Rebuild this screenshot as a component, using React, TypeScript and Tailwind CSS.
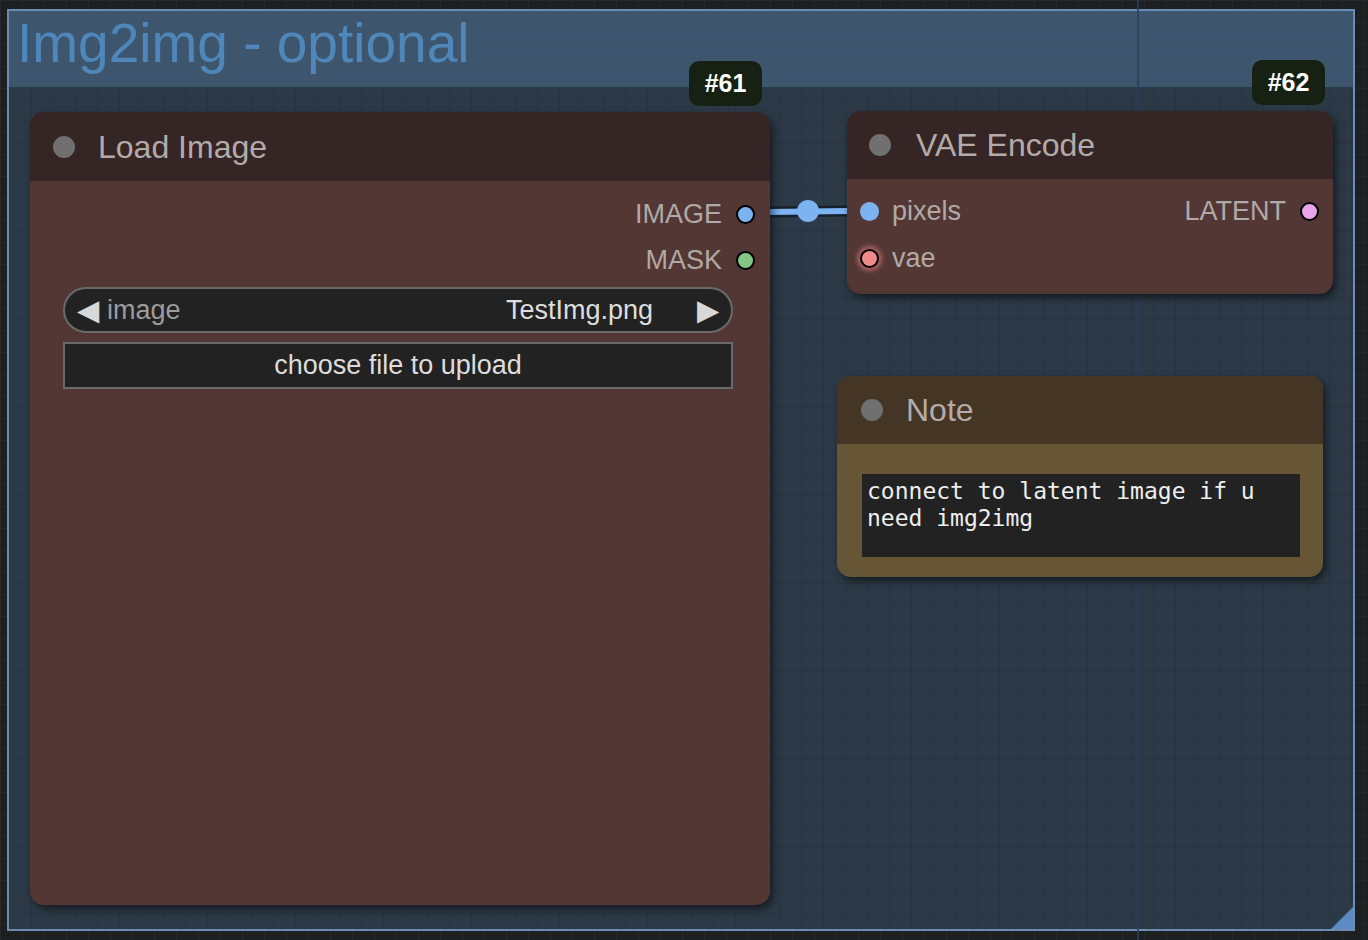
const sans = "font-['Liberation_Sans',Arial,sans-serif]"

function TitleDot() {
  return <span className="w-[22px] h-[22px] rounded-full bg-[#707070] shrink-0" />
}

function Badge({ label }: { label: string }) {
  return (
    <div className="absolute right-[8px] top-[-51px] w-[73px] h-[45px] rounded-[10px] bg-[#172113] flex items-center justify-center text-white text-[25px] font-bold">
      {label}
    </div>
  )
}

function OutputSlot({ label, color }: { label: string; color: string }) {
  return (
    <div className="h-[46px] flex items-center justify-end pr-[15px] gap-[14px]">
      <span className="text-[27px] text-[#b1a9a7]">{label}</span>
      <span className={`w-[19px] h-[19px] rounded-full border-2 border-black ${color}`} />
    </div>
  )
}

function LoadImageNode() {
  return (
    <div className={`absolute left-[30px] top-[112px] w-[740px] h-[793px] rounded-[14px] bg-[#533735] shadow-[3px_4px_8px_rgba(0,0,0,0.55)] flex flex-col ${sans}`}>
      <Badge label="#61" />
      <div className="h-[69px] shrink-0 rounded-t-[14px] bg-[#352524] flex items-center pl-[23px] gap-[23px]">
        <TitleDot />
        <span className="text-[32px] text-[#b3aba9]">Load Image</span>
      </div>
      <div className="pt-[10px] flex flex-col">
        <OutputSlot label="IMAGE" color="bg-[#7cb4f2]" />
        <OutputSlot label="MASK" color="bg-[#83c785]" />
      </div>
      <div className="ml-[33px] mt-[4px] w-[670px] h-[46px] rounded-full bg-[#222222] border-2 border-[#6a6a6a] flex items-center pl-[12px] pr-[12px] text-[27px]">
        <span className="text-[#d8d8d8] text-[29px] leading-none">◀</span>
        <span className="ml-[8px] text-[#9c9c9c]">image</span>
        <span className="ml-auto text-[#dddddd]">TestImg.png</span>
        <span className="ml-[44px] text-[#d8d8d8] text-[29px] leading-none">▶</span>
      </div>
      <div className="ml-[33px] mt-[9px] w-[670px] h-[47px] bg-[#222222] border-2 border-[#6a6a6a] flex items-center justify-center text-[27px] text-[#dddddd]">
        choose file to upload
      </div>
    </div>
  )
}

function InputSlot({ label, dot }: { label: string; dot: string }) {
  return (
    <div className="flex items-center gap-[13px]">
      <span className={`w-[19px] h-[19px] rounded-full ${dot}`} />
      <span className="text-[27px] text-[#b1a9a7]">{label}</span>
    </div>
  )
}

function VaeEncodeNode() {
  return (
    <div className={`absolute left-[847px] top-[111px] w-[486px] h-[183px] rounded-[14px] bg-[#533735] shadow-[3px_4px_8px_rgba(0,0,0,0.55)] flex flex-col ${sans}`}>
      <Badge label="#62" />
      <div className="h-[68px] shrink-0 rounded-t-[14px] bg-[#352524] flex items-center pl-[22px] gap-[25px]">
        <TitleDot />
        <span className="text-[32px] text-[#b3aba9]">VAE Encode</span>
      </div>
      <div className="pt-[9px] pl-[13px] pr-[14px] flex flex-col">
        <div className="h-[47px] flex items-center justify-between">
          <InputSlot label="pixels" dot="bg-[#7cb4f2]" />
          <div className="flex items-center gap-[14px]">
            <span className="text-[27px] text-[#b1a9a7]">LATENT</span>
            <span className="w-[19px] h-[19px] rounded-full border-2 border-black bg-[#eba3ec]" />
          </div>
        </div>
        <div className="h-[47px] flex items-center">
          <InputSlot
            label="vae"
            dot="border-2 border-black bg-[#f08a88] shadow-[0_0_4px_3px_rgba(240,130,130,0.55)]"
          />
        </div>
      </div>
    </div>
  )
}

function NoteNode() {
  return (
    <div className={`absolute left-[837px] top-[376px] w-[486px] h-[201px] rounded-[14px] bg-[#665636] shadow-[3px_4px_8px_rgba(0,0,0,0.55)] flex flex-col ${sans}`}>
      <div className="h-[68px] shrink-0 rounded-t-[14px] bg-[#453524] flex items-center pl-[24px] gap-[23px]">
        <TitleDot />
        <span className="text-[32px] text-[#b3aba9]">Note</span>
      </div>
      <div className="ml-[25px] mt-[30px] w-[438px] h-[83px] bg-[#222222] pl-[5px] pt-[4px] font-['DejaVu_Sans_Mono',monospace] text-[23px] leading-[27px] text-[#eeeeee]">
        connect to latent image if u
        <br />
        need img2img
      </div>
    </div>
  )
}

function Link() {
  return (
    <svg className="absolute left-0 top-0" width="1368" height="940">
      <line x1="768" y1="212" x2="849" y2="211" stroke="#16202a" strokeWidth="11" />
      <line x1="768" y1="212" x2="849" y2="211" stroke="#7cb4f2" strokeWidth="6" />
      <circle cx="808" cy="211" r="11" fill="#7cb4f2" />
    </svg>
  )
}

export default function App() {
  return (
    <div className="relative w-[1368px] h-[940px] overflow-hidden bg-[#1e1f20] bg-[linear-gradient(#262829_1px,transparent_1px),linear-gradient(90deg,#262829_1px,transparent_1px)] bg-[size:22px_22px]">
      <div className="absolute left-[7px] top-[9px] w-[1348px] h-[922px] border-2 border-[#6b8db3] bg-[#2c3a47] bg-[linear-gradient(#28343f_1px,transparent_1px),linear-gradient(90deg,#28343f_1px,transparent_1px)] bg-[size:22px_22px] flex flex-col">
        <div className={`h-[76px] shrink-0 bg-[#3e5771]/95 pl-[8px] pt-[5px] text-[55px] leading-none text-[#4f87ba] ${sans}`}>
          Img2img - optional
        </div>
        <div className="absolute right-0 bottom-0 w-0 h-0 border-l-[22px] border-l-transparent border-b-[22px] border-b-[#5b8bc0]" />
      </div>
      <div className="absolute left-[1137px] top-0 w-[2px] h-[940px] bg-[#2b3d62]/80" />
      <Link />
      <LoadImageNode />
      <VaeEncodeNode />
      <NoteNode />
    </div>
  )
}
